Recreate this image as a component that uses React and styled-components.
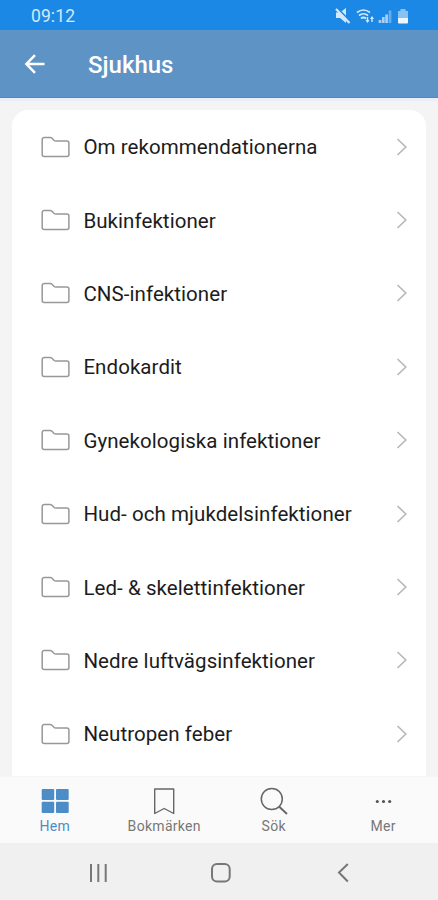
import React from "react";
import styled, { createGlobalStyle } from "styled-components";

const GlobalStyle = createGlobalStyle`
  *, *::before, *::after { box-sizing: border-box; }
  body { margin: 0; font-family: Roboto, "Liberation Sans", sans-serif; background: #f4f4f4; }
  svg { display: block; flex: none; }
`;

const Screen = styled.div`
  width: 438px;
  height: 900px;
  display: flex;
  flex-direction: column;
  overflow: hidden;
  background: #f4f4f4;
`;

const StatusBar = styled.div`
  height: 30px;
  flex: none;
  display: flex;
  align-items: center;
  justify-content: space-between;
  padding: 2px 28px 0 31px;
  background: #1c88e5;
  color: #d3e9fb;
`;

const Clock = styled.span`
  font-size: 17.5px;
  line-height: 20px;
  letter-spacing: 0.1px;
`;

const Header = styled.header`
  height: 68px;
  flex: none;
  display: flex;
  align-items: center;
  padding: 0 0 0 24px;
  background: #5e93c5;
  border-bottom: 1px solid #5489bf;
  color: #fff;
`;

const Title = styled.h1`
  margin: 3px 0 0 43px;
  font-size: 24px;
  line-height: 30px;
  font-weight: 500;
`;

const Content = styled.main`
  flex: 1;
  min-height: 0;
  display: flex;
  padding: 12px 12px 0 12px;
  border-top: 3px solid #e9eef8;
`;

const Card = styled.ul`
  flex: 1;
  margin: -3px 0 0;
  padding: 0;
  list-style: none;
  overflow: hidden;
  background: #fff;
  border-radius: 16px 16px 0 0;
`;

const Row = styled.li`
  height: 73.4px;
  display: flex;
  align-items: center;
  padding: 0 19px 0 29px;
`;

const Label = styled.span`
  flex: 1;
  margin: 1px 0 0 13.4px;
  font-size: 20.5px;
  line-height: 26px;
  letter-spacing: 0.07px;
  white-space: nowrap;
  color: #1c1c1c;
`;

const TabBar = styled.nav`
  height: 67px;
  flex: none;
  display: grid;
  grid-template-columns: repeat(4, 1fr);
  background: #fafafa;
  border-top: 1px solid #f6f6f6;
`;

const Tab = styled.div`
  display: flex;
  flex-direction: column;
  align-items: center;
  padding-top: 8px;
  color: ${({ $active }) => ($active ? "#4d8dc7" : "#777")};
`;

const TabLabel = styled.span`
  margin-top: 1px;
  font-size: 14px;
  line-height: 16px;
  letter-spacing: 0.3px;
`;

const SystemBar = styled.div`
  height: 57px;
  flex: none;
  display: flex;
  align-items: center;
  justify-content: space-between;
  padding: 3px 84px 0 86px;
  background: #f0f0f0;
`;

const StatusIcons = () => (
  <svg width="76" height="18" viewBox="334 6 76 18" fill="none">
    <path d="M336 11.500h4l6-4.500v15l-6-5h-4z" fill="#d3e9fb" />
    <path d="M336 6l14 14" stroke="#1c88e5" strokeWidth="1.800" />
    <path d="M336 8l13.500 14" stroke="#d3e9fb" strokeWidth="2.200" />
    <path d="M357 11.500q6.500-5 13 0M359 14.500q4.500-3.500 9 0M361 17.500q2.500-2 5 0" stroke="#d3e9fb" strokeWidth="1.700" />
    <path d="M367.500 16v5M372 21v-5" stroke="#d3e9fb" strokeWidth="1.400" />
    <path d="M365.500 19h4l-2 3zM370 18h4l-2-3z" fill="#d3e9fb" />
    <path d="M380 22v-3M383.300 22v-6M386.600 22v-8.500" stroke="#a6d0f5" strokeWidth="2.700" />
    <path d="M390 22V9.500" stroke="#68aeec" strokeWidth="2.700" />
    <path d="M398 10h2.500V8h5v2h2.500v7h-10z" fill="#8bc1f0" />
    <path d="M398 17h10v4.500q0 1-1 1h-8q-1 0-1-1z" fill="#edf6ff" />
  </svg>
);

const BackArrow = () => (
  <svg width="21" height="20" viewBox="0 0 21 20" fill="none" stroke="currentColor" strokeWidth="2.500">
    <path d="M20.500 10H2.500M11 1.200L2.400 10l8.600 8.800" />
  </svg>
);

const Folder = () => (
  <svg width="29" height="22" viewBox="0 0 29 22" fill="none" stroke="#989898" strokeWidth="1.500" strokeLinejoin="round">
    <path d="M1.200 3.700Q1.200 1.500 3.400 1.500H9q1.200 0 2 .8l2.100 2.200q.7.600 1.700.600h11.100q2 0 2 2V18.500q0 2-2 2H3.200q-2 0-2-2z" />
  </svg>
);

const Chevron = () => (
  <svg width="11" height="18" viewBox="0 0 11 18" fill="none" stroke="#b9b9b9" strokeWidth="1.700">
    <path d="M1.500 1l8.300 8-8.300 8" />
  </svg>
);

const HomeIcon = () => (
  <svg width="28" height="32" viewBox="0 0 28 32" fill="currentColor">
    <rect x=".7" y="4" width="12.500" height="11" rx="1" />
    <rect x="15" y="4" width="12.700" height="11" rx="1" />
    <rect x=".7" y="16.700" width="12.500" height="11.300" rx="1" />
    <rect x="15" y="16.700" width="12.700" height="11.300" rx="1" />
  </svg>
);

const BookmarkIcon = () => (
  <svg width="28" height="32" viewBox="0 0 28 32" fill="none" stroke="#666" strokeWidth="1.400">
    <path d="M4.700 4H23.700V28.500L14.200 23.500 4.700 28.500z" strokeLinejoin="round" />
  </svg>
);

const SearchIcon = () => (
  <svg width="28" height="32" viewBox="0 0 28 32" fill="none" stroke="#666" strokeWidth="1.500">
    <circle cx="11.800" cy="14" r="10.500" />
    <path d="M19 21.500l8 7.500" strokeWidth="1.900" />
  </svg>
);

const MoreIcon = () => (
  <svg width="28" height="32" viewBox="0 0 28 32" fill="#555">
    <circle cx="8.300" cy="16.500" r="1.550" />
    <circle cx="14.500" cy="16.500" r="1.550" />
    <circle cx="20.700" cy="16.500" r="1.550" />
  </svg>
);

const RecentsIcon = () => (
  <svg width="24" height="20" viewBox="0 0 24 20" stroke="#777" strokeWidth="2">
    <path d="M5 1v18M12.300 1v18M19.700 1v18" />
  </svg>
);

const HomeButtonIcon = () => (
  <svg width="24" height="20" viewBox="0 0 24 20" fill="none" stroke="#777" strokeWidth="2">
    <rect x="4" y="1" width="17.700" height="17.500" rx="5" />
  </svg>
);

const BackIcon = () => (
  <svg width="24" height="20" viewBox="0 0 24 20" fill="none" stroke="#777" strokeWidth="2">
    <path d="M17.800 1L9 9.500l8.800 9" />
  </svg>
);

const folders = [
  "Om rekommendationerna",
  "Bukinfektioner",
  "CNS-infektioner",
  "Endokardit",
  "Gynekologiska infektioner",
  "Hud- och mjukdelsinfektioner",
  "Led- & skelettinfektioner",
  "Nedre luftvägsinfektioner",
  "Neutropen feber",
];

const tabs = [
  ["Hem", HomeIcon],
  ["Bokmärken", BookmarkIcon],
  ["Sök", SearchIcon],
  ["Mer", MoreIcon],
];

export default function App() {
  return (
    <Screen>
      <GlobalStyle />
      <StatusBar>
        <Clock>09:12</Clock>
        <StatusIcons />
      </StatusBar>
      <Header>
        <BackArrow />
        <Title>Sjukhus</Title>
      </Header>
      <Content>
        <Card>
          {folders.map((name) => (
            <Row key={name}>
              <Folder />
              <Label>{name}</Label>
              <Chevron />
            </Row>
          ))}
        </Card>
      </Content>
      <TabBar>
        {tabs.map(([name, Icon], index) => (
          <Tab key={name} $active={index === 0}>
            <Icon />
            <TabLabel>{name}</TabLabel>
          </Tab>
        ))}
      </TabBar>
      <SystemBar>
        <RecentsIcon />
        <HomeButtonIcon />
        <BackIcon />
      </SystemBar>
    </Screen>
  );
}
